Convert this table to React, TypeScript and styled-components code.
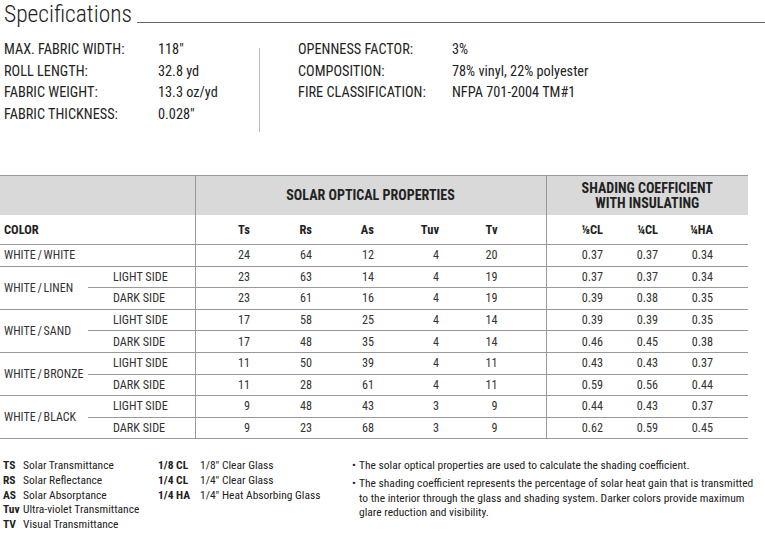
import React from "react";
import styled, { createGlobalStyle } from "styled-components";

const GlobalStyle = createGlobalStyle`
  body {
    margin: 0;
    background: #ffffff;
  }
`;

const FONT = `"Roboto Condensed", Roboto, sans-serif`;

const Page = styled.div`
  width: 765px;
  height: 539px;
  overflow: hidden;
  font-family: ${FONT};
  font-stretch: condensed;
  color: #222;
`;

const Header = styled.div`
  display: flex;
  align-items: flex-start;
  height: 39px;
  padding-left: 4px;
`;

const Title = styled.h1`
  margin: 0;
  font-size: 23.5px;
  line-height: 28px;
  font-weight: 300;
  color: #222;
`;

const TitleRule = styled.div`
  flex: 1;
  margin: 22px 0 0 5px;
  border-top: 1px solid #666;
`;

const Specs = styled.div`
  display: flex;
  align-items: flex-start;
  height: 136px;
  padding-left: 4px;
`;

const SpecGroup = styled.div<{ $width?: number; $indent?: number }>`
  width: ${(p) => (p.$width ? `${p.$width}px` : "auto")};
  padding-left: ${(p) => p.$indent ?? 0}px;
`;

const SpecRow = styled.div`
  display: flex;
  font-size: 14.3px;
  line-height: 21.7px;
`;

const SpecLabel = styled.div`
  width: 154px;
`;

const Divider = styled.div`
  width: 1px;
  height: 84px;
  margin-top: 9px;
  background: #bbb;
`;

const Table = styled.table`
  width: 748px;
  border-collapse: collapse;
  table-layout: fixed;
  border-top: 1px solid #999;
  font-size: 12.2px;
  color: #333;
`;

const GroupHead = styled.th<{ $divider?: boolean }>`
  height: 39px;
  padding: 0;
  background: #d9d9d9;
  font-size: 14px;
  line-height: 15px;
  font-weight: bold;
  color: #222;
  text-align: center;
  border-left: ${(p) => (p.$divider ? "1px solid #999" : "none")};
`;

const ColHead = styled.th<{ $pad?: number; $divider?: boolean }>`
  height: 29px;
  padding: 0 ${(p) => p.$pad ?? 0}px 0 4px;
  font-size: 12.5px;
  font-weight: bold;
  color: #222;
  text-align: ${(p) => (p.$pad === undefined ? "left" : "right")};
  border-bottom: 1px solid #999;
  border-left: ${(p) => (p.$divider ? "1px solid #999" : "none")};
`;

const Cell = styled.td<{ $pad?: number; $divider?: boolean }>`
  height: 20.6px;
  padding: 0 ${(p) => p.$pad ?? 0}px 0 0;
  text-align: right;
  vertical-align: middle;
  white-space: nowrap;
  border-bottom: 1px solid #999;
  border-left: ${(p) => (p.$divider ? "1px solid #999" : "none")};
`;

const ColorCell = styled.td`
  padding: 0 0 0 4px;
  font-size: 12px;
  word-spacing: -1px;
  vertical-align: middle;
  white-space: nowrap;
  border-bottom: 1px solid #999;
`;

const SideCell = styled.td`
  padding: 0 0 0 25px;
  vertical-align: middle;
  white-space: nowrap;
  border-bottom: 1px solid #999;
`;

const Legend = styled.div`
  display: flex;
  align-items: flex-start;
  margin-top: 19px;
  font-size: 11.5px;
  line-height: 14.6px;
  color: #222;
`;

const KeyList = styled.dl<{ $abbr: number; $width: number; $indent?: number }>`
  display: grid;
  grid-template-columns: ${(p) => p.$abbr}px 1fr;
  width: ${(p) => p.$width}px;
  margin: 0;
  padding-left: ${(p) => p.$indent ?? 0}px;
`;

const KeyTerm = styled.dt`
  font-weight: bold;
  white-space: nowrap;
`;

const KeyDesc = styled.dd`
  margin: 0;
  white-space: nowrap;
`;

const Notes = styled.ul`
  margin: 0 0 0 9px;
  padding: 0;
  list-style: none;
  white-space: nowrap;
`;

const Note = styled.li`
  display: flex;
  & + & {
    margin-top: 3px;
  }
`;

const Bullet = styled.span`
  flex: none;
  width: 7px;
`;

const leftSpecs = [
  ["MAX. FABRIC WIDTH:", "118\""],
  ["ROLL LENGTH:", "32.8 yd"],
  ["FABRIC WEIGHT:", "13.3 oz/yd"],
  ["FABRIC THICKNESS:", "0.028\""],
];

const rightSpecs = [
  ["OPENNESS FACTOR:", "3%"],
  ["COMPOSITION:", "78% vinyl, 22% polyester"],
  ["FIRE CLASSIFICATION:", "NFPA 701-2004 TM#1"],
];

const columns = [
  { label: "Ts", pad: 15, divider: true },
  { label: "Rs", pad: 13 },
  { label: "As", pad: 16 },
  { label: "Tuv", pad: 21 },
  { label: "Tv", pad: 48 },
  { label: "\u215BCL", pad: 17, divider: true },
  { label: "\u00BCCL", pad: 17 },
  { label: "\u00BCHA", pad: 35 },
];

const widths = [88, 107, 70, 60, 65, 70, 86, 74, 55, 73];

type Values = (number | string)[];

const fabrics: { color: string; sides: { side?: string; values: Values }[] }[] = [
  { color: "WHITE / WHITE", sides: [{ values: [24, 64, 12, 4, 20, "0.37", "0.37", "0.34"] }] },
  {
    color: "WHITE / LINEN",
    sides: [
      { side: "LIGHT SIDE", values: [23, 63, 14, 4, 19, "0.37", "0.37", "0.34"] },
      { side: "DARK SIDE", values: [23, 61, 16, 4, 19, "0.39", "0.38", "0.35"] },
    ],
  },
  {
    color: "WHITE / SAND",
    sides: [
      { side: "LIGHT SIDE", values: [17, 58, 25, 4, 14, "0.39", "0.39", "0.35"] },
      { side: "DARK SIDE", values: [17, 48, 35, 4, 14, "0.46", "0.45", "0.38"] },
    ],
  },
  {
    color: "WHITE / BRONZE",
    sides: [
      { side: "LIGHT SIDE", values: [11, 50, 39, 4, 11, "0.43", "0.43", "0.37"] },
      { side: "DARK SIDE", values: [11, 28, 61, 4, 11, "0.59", "0.56", "0.44"] },
    ],
  },
  {
    color: "WHITE / BLACK",
    sides: [
      { side: "LIGHT SIDE", values: [9, 48, 43, 3, 9, "0.44", "0.43", "0.37"] },
      { side: "DARK SIDE", values: [9, 23, 68, 3, 9, "0.62", "0.59", "0.45"] },
    ],
  },
];

const opticalKeys = [
  ["TS", "Solar Transmittance"],
  ["RS", "Solar Reflectance"],
  ["AS", "Solar Absorptance"],
  ["Tuv", "Ultra-violet Transmittance"],
  ["TV", "Visual Transmittance"],
];

const glassKeys = [
  ["1/8 CL", "1/8\" Clear Glass"],
  ["1/4 CL", "1/4\" Clear Glass"],
  ["1/4 HA", "1/4\" Heat Absorbing Glass"],
];

const ValueCells = ({ values }: { values: Values }) => (
  <>
    {values.map((v, i) => (
      <Cell key={i} $pad={columns[i].pad} $divider={columns[i].divider}>
        {v}
      </Cell>
    ))}
  </>
);

export default function App() {
  return (
    <Page>
      <GlobalStyle />
      <Header>
        <Title>Specifications</Title>
        <TitleRule />
      </Header>

      <Specs>
        <SpecGroup $width={255}>
          {leftSpecs.map(([label, value]) => (
            <SpecRow key={label}>
              <SpecLabel>{label}</SpecLabel>
              <div>{value}</div>
            </SpecRow>
          ))}
        </SpecGroup>
        <Divider />
        <SpecGroup $indent={38}>
          {rightSpecs.map(([label, value]) => (
            <SpecRow key={label}>
              <SpecLabel>{label}</SpecLabel>
              <div>{value}</div>
            </SpecRow>
          ))}
        </SpecGroup>
      </Specs>

      <Table>
        <colgroup>
          {widths.map((w, i) => (
            <col key={i} style={{ width: w }} />
          ))}
        </colgroup>
        <thead>
          <tr>
            <GroupHead colSpan={2} />
            <GroupHead colSpan={5} $divider>
              SOLAR OPTICAL PROPERTIES
            </GroupHead>
            <GroupHead colSpan={3} $divider>
              SHADING COEFFICIENT
              <br />
              WITH INSULATING
            </GroupHead>
          </tr>
          <tr>
            <ColHead colSpan={2}>COLOR</ColHead>
            {columns.map((c) => (
              <ColHead key={c.label} $pad={c.pad} $divider={c.divider}>
                {c.label}
              </ColHead>
            ))}
          </tr>
        </thead>
        <tbody>
          {fabrics.map((f) =>
            f.sides.map((s, i) => (
              <tr key={f.color + i}>
                {s.side === undefined ? (
                  <ColorCell colSpan={2}>{f.color}</ColorCell>
                ) : (
                  <>
                    {i === 0 && <ColorCell rowSpan={2}>{f.color}</ColorCell>}
                    <SideCell>{s.side}</SideCell>
                  </>
                )}
                <ValueCells values={s.values} />
              </tr>
            ))
          )}
        </tbody>
      </Table>

      <Legend>
        <KeyList $abbr={20} $width={155} $indent={3}>
          {opticalKeys.map(([k, d]) => (
            <React.Fragment key={k}>
              <KeyTerm>{k}</KeyTerm>
              <KeyDesc>{d}</KeyDesc>
            </React.Fragment>
          ))}
        </KeyList>
        <KeyList $abbr={42} $width={185}>
          {glassKeys.map(([k, d]) => (
            <React.Fragment key={k}>
              <KeyTerm>{k}</KeyTerm>
              <KeyDesc>{d}</KeyDesc>
            </React.Fragment>
          ))}
        </KeyList>
        <Notes>
          <Note>
            <Bullet>•</Bullet>
            <span>The solar optical properties are used to calculate the shading coefficient.</span>
          </Note>
          <Note>
            <Bullet>•</Bullet>
            <span>
              The shading coefficient represents the percentage of solar heat gain that is transmitted
              <br />
              to the interior through the glass and shading system. Darker colors provide maximum
              <br />
              glare reduction and visibility.
            </span>
          </Note>
        </Notes>
      </Legend>
    </Page>
  );
}
